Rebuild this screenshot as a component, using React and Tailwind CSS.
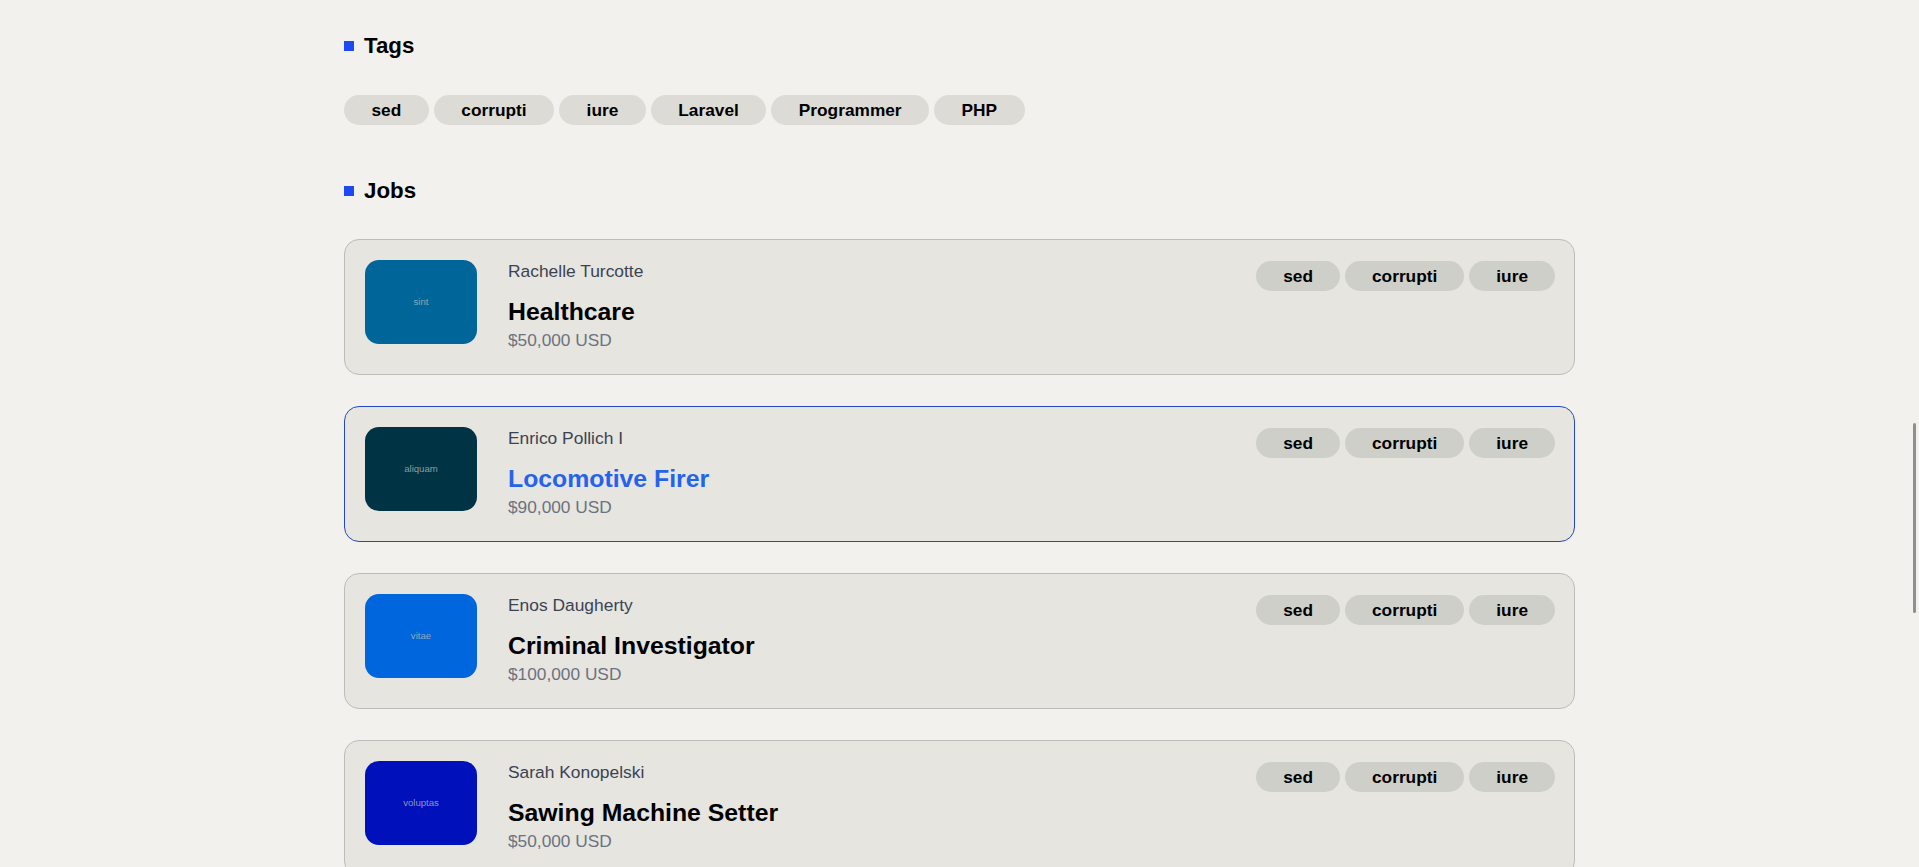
import React from 'react';

const tags = ['sed', 'corrupti', 'iure', 'Laravel', 'Programmer', 'PHP'];

const jobs = [
  { id: 1, employer: 'Rachelle Turcotte', title: 'Healthcare', salary: '$50,000 USD', logo: 'sint', color: 'bg-[#006699]' },
  { id: 2, employer: 'Enrico Pollich I', title: 'Locomotive Firer', salary: '$90,000 USD', logo: 'aliquam', color: 'bg-[#003344]', active: true },
  { id: 3, employer: 'Enos Daugherty', title: 'Criminal Investigator', salary: '$100,000 USD', logo: 'vitae', color: 'bg-[#0066dd]' },
  { id: 4, employer: 'Sarah Konopelski', title: 'Sawing Machine Setter', salary: '$50,000 USD', logo: 'voluptas', color: 'bg-[#0011bb]' },
];

function SectionHeading({ children }) {
  return (
    <div className="flex items-center gap-[10px] h-[28px]">
      <span className="w-[10px] h-[10px] bg-[#1e48f0]" />
      <h2 className="text-[22.3px] leading-[28px] font-bold text-black">{children}</h2>
    </div>
  );
}

function Tag({ name, small }) {
  return (
    <span
      className={`${small ? 'bg-[#cfcfca] px-[27px]' : 'bg-[#dcdbd6] px-[27.5px]'} rounded-full h-[30px] leading-[30px] text-[17.3px] font-bold text-black`}
    >
      {name}
    </span>
  );
}

function JobCard({ job }) {
  return (
    <div
      className={`flex justify-between bg-[#e6e5e0] rounded-[15px] border pl-[20px] pr-[19px] pt-[20px] pb-[21px] ${
        job.active ? 'border-[#2447c4]' : 'border-[#bcbcb8]'
      }`}
    >
      <div className="flex gap-[31px]">
        <div className={`${job.color} w-[112px] h-[84px] rounded-[14px] flex items-center justify-center`}>
          <span className="text-[9.6px] text-[#b8b8b8]/80">{job.logo}</span>
        </div>
        <div className="flex flex-col">
          <div className="text-[17.4px] leading-[22px] text-[#3b4352]">{job.employer}</div>
          <h3
            className={`mt-[15px] text-[24.8px] leading-[30px] font-bold ${
              job.active ? 'text-[#2563eb]' : 'text-black'
            }`}
          >
            {job.title}
          </h3>
          <div className="text-[17.3px] leading-[26px] text-[#6b7280]">{job.salary}</div>
        </div>
      </div>
      <div className="flex gap-[5px] items-start pt-[1px]">
        {['sed', 'corrupti', 'iure'].map((t) => (
          <Tag key={t} name={t} small />
        ))}
      </div>
    </div>
  );
}

export default function App() {
  return (
    <div className="min-h-screen bg-[#f2f1ed] font-['Liberation_Sans',Arial,sans-serif]">
      <main className="w-[1231px] mx-auto pt-[32px] pb-10">
        {/* Tags */}
        <section>
          <SectionHeading>Tags</SectionHeading>
          <div className="mt-[35px] flex gap-[5px]">
            {tags.map((t) => (
              <Tag key={t} name={t} />
            ))}
          </div>
        </section>

        {/* Jobs */}
        <section className="mt-[52px]">
          <SectionHeading>Jobs</SectionHeading>
          <div className="mt-[34px] flex flex-col gap-[31px]">
            {jobs.map((job) => (
              <JobCard key={job.id} job={job} />
            ))}
          </div>
        </section>
      </main>
      <div className="fixed right-[3px] top-[423px] w-[3px] h-[190px] rounded-full bg-[#8f8f8f]" />
    </div>
  );
}
